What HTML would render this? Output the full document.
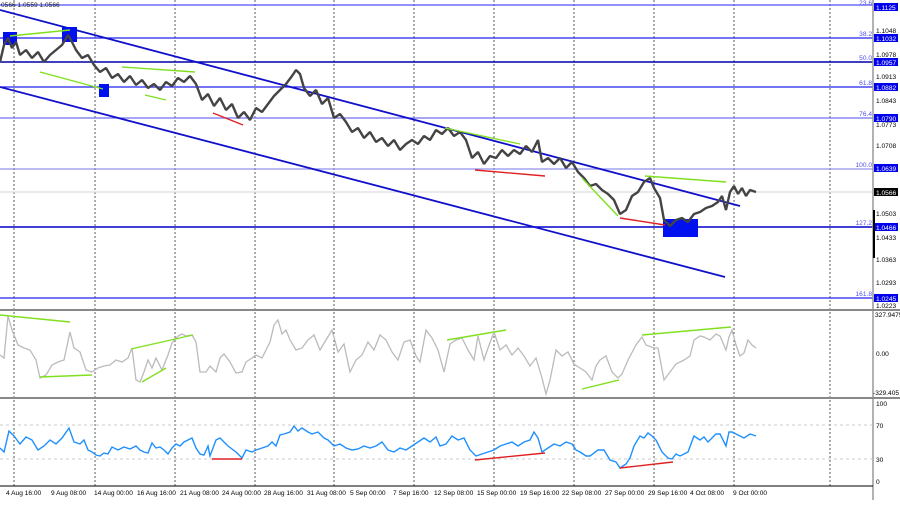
<!DOCTYPE html>
<html><head><style>
body{margin:0;background:#fff;width:900px;height:500px;overflow:hidden;font-family:"Liberation Sans",sans-serif}
svg text{font-family:"Liberation Sans",sans-serif;font-size:6.6px}
</style></head><body>
<svg width="900" height="500" viewBox="0 0 900 500" xmlns="http://www.w3.org/2000/svg">
<rect width="900" height="500" fill="#fff"/>
<g stroke="#333" stroke-width="0.8" stroke-dasharray="2,2">
<line x1="14" y1="0" x2="14" y2="486"/><line x1="95" y1="0" x2="95" y2="486"/><line x1="175" y1="0" x2="175" y2="486"/><line x1="255" y1="0" x2="255" y2="486"/><line x1="334" y1="0" x2="334" y2="486"/><line x1="414" y1="0" x2="414" y2="486"/><line x1="494" y1="0" x2="494" y2="486"/><line x1="574" y1="0" x2="574" y2="486"/><line x1="654" y1="0" x2="654" y2="486"/><line x1="734" y1="0" x2="734" y2="486"/><line x1="830" y1="0" x2="830" y2="486"/>
</g>
<g stroke-width="1.2">
<line x1="0" y1="5" x2="873" y2="5" stroke="#5050ff"/>
<line x1="0" y1="38" x2="873" y2="38" stroke="#2020ee"/>
<line x1="0" y1="62" x2="873" y2="62" stroke="#0000aa" stroke-width="1.6"/>
<line x1="0" y1="87" x2="873" y2="87" stroke="#2020ee"/>
<line x1="0" y1="118" x2="873" y2="118" stroke="#7070ee"/>
<line x1="0" y1="169" x2="873" y2="169" stroke="#9090ee"/>
<line x1="0" y1="192" x2="873" y2="192" stroke="#ddd"/>
<line x1="0" y1="227" x2="873" y2="227" stroke="#0000cc" stroke-width="1.6"/>
<line x1="0" y1="298" x2="873" y2="298" stroke="#2020ee"/>
</g>
<g fill="#5050ee" text-anchor="end"><text x="872" y="5">23.6</text><text x="872" y="36">38.2</text><text x="872" y="60">50.0</text><text x="872" y="85">61.8</text><text x="872" y="116">76.4</text><text x="872" y="167">100.0</text><text x="872" y="225">127.2</text><text x="872" y="296">161.8</text></g>
<line x1="0" y1="10" x2="740" y2="206" stroke="#1010cc" stroke-width="1.8"/>
<line x1="0" y1="87" x2="725" y2="277" stroke="#1010cc" stroke-width="1.8"/>
<g fill="#0010ee"><rect x="3" y="32" width="14" height="13"/><rect x="62" y="27" width="15" height="15"/><rect x="99" y="84" width="10" height="13"/><rect x="663" y="219" width="35" height="18"/></g>
<polyline fill="none" stroke="#444" stroke-width="2.4" stroke-linejoin="bevel" points="0,62 4,45 8,38 12,48 16,42 20,55 26,50 32,58 38,52 44,62 50,55 56,50 62,45 68,35 72,42 76,50 82,58 88,55 94,65 100,72 106,68 112,78 118,74 124,82 130,76 136,85 142,80 148,88 154,84 160,90 166,82 172,86 178,78 184,82 190,76 196,84 202,100 208,94 214,106 220,98 226,110 232,104 238,118 244,112 250,120 256,108 262,112 268,104 274,96 280,90 286,84 292,76 296,70 300,74 304,88 310,96 316,90 322,104 328,98 334,118 340,114 346,122 352,132 358,128 364,138 370,132 376,142 382,138 388,146 394,140 400,150 406,144 412,140 418,144 424,136 430,140 436,130 442,134 448,128 454,136 460,132 466,140 472,158 478,152 484,164 490,156 496,158 502,150 508,156 514,150 520,154 526,146 532,152 538,140 542,162 548,158 554,164 560,158 566,168 572,162 578,172 584,178 590,186 596,184 602,190 608,194 614,200 620,214 626,210 632,196 638,192 644,182 650,178 654,188 660,198 664,220 670,226 676,220 682,218 688,222 694,214 700,212 706,208 712,206 718,202 722,196 726,210 730,192 734,186 738,194 742,188 746,196 750,190 756,192"/>
<g stroke="#80e020" stroke-width="1.4" fill="none">
<line x1="10" y1="36" x2="70" y2="30"/><line x1="40" y1="72" x2="103" y2="89"/><line x1="122" y1="67" x2="195" y2="72"/><line x1="145" y1="95" x2="166" y2="100"/><line x1="445" y1="128" x2="520" y2="144"/><line x1="582" y1="178" x2="618" y2="216"/><line x1="645" y1="176" x2="726" y2="182"/>
</g>
<g stroke="#e02020" stroke-width="1.4"><line x1="213" y1="113" x2="243" y2="125"/><line x1="475" y1="170" x2="545" y2="176"/><line x1="620" y1="218" x2="665" y2="225"/></g>
<rect x="873" y="0" width="27" height="486" fill="#fff"/>
<line x1="873" y1="0" x2="873" y2="500" stroke="#999" stroke-width="1.5"/>
<g fill="#0000ee"><rect x="874" y="3" width="24" height="8"/><rect x="874" y="34" width="24" height="8"/><rect x="874" y="58" width="24" height="8"/><rect x="874" y="83" width="24" height="8"/><rect x="874" y="114" width="24" height="8"/><rect x="874" y="164" width="24" height="8"/><rect x="874" y="223" width="24" height="8"/><rect x="874" y="294" width="24" height="8"/></g>
<rect x="874" y="188" width="24" height="8" fill="#000"/>
<line x1="874" y1="210" x2="874" y2="258" stroke="#000" stroke-width="2"/>
<g fill="#fff"><text x="876" y="10">1.1125</text><text x="876" y="41">1.1032</text><text x="876" y="65">1.0957</text><text x="876" y="90">1.0882</text><text x="876" y="121">1.0790</text><text x="876" y="171">1.0639</text><text x="876" y="195">1.0566</text><text x="876" y="230">1.0466</text><text x="876" y="301">1.0245</text></g>
<g fill="#000"><text x="876" y="33">1.1048</text><text x="876" y="57">1.0978</text><text x="876" y="79">1.0913</text><text x="876" y="103">1.0843</text><text x="876" y="127">1.0773</text><text x="876" y="148">1.0708</text><text x="876" y="216">1.0503</text><text x="876" y="240">1.0433</text><text x="876" y="262">1.0363</text><text x="876" y="285">1.0293</text><text x="876" y="308">1.0223</text></g>
<text x="1" y="7" fill="#222">0566 1.0559 1.0566</text>
<line x1="0" y1="310" x2="900" y2="310" stroke="#888" stroke-width="2"/>
<line x1="0" y1="398" x2="900" y2="398" stroke="#888" stroke-width="2"/>
<line x1="0" y1="486" x2="873" y2="486" stroke="#000"/>
<polyline fill="none" stroke="#bbb" stroke-width="1.3" points="0,355 4,358 8,316 12,330 18,345 24,348 30,350 36,360 40,378 46,375 52,365 58,362 64,360 70,332 74,348 80,352 86,370 92,372 98,368 104,366 110,365 116,360 122,362 128,358 132,348 136,380 140,382 144,372 148,360 152,368 156,358 162,370 168,355 172,343 178,336 182,334 186,336 192,335 196,342 200,372 206,372 210,366 216,372 220,358 224,354 230,362 236,373 242,372 246,362 252,358 256,355 262,358 266,350 270,342 274,325 278,320 282,334 286,330 290,340 296,350 302,348 308,340 314,335 320,350 326,340 332,330 338,352 344,344 350,372 356,360 362,355 368,342 374,350 380,335 386,340 392,352 398,360 404,342 410,340 416,356 420,362 426,330 432,338 438,350 444,372 450,344 456,340 462,338 468,350 474,360 478,336 484,360 488,348 494,332 500,350 506,345 512,355 518,348 524,356 530,366 536,358 542,378 546,394 550,380 556,350 562,356 568,352 574,364 580,368 586,372 592,380 596,366 600,360 606,356 612,372 618,378 622,374 628,360 636,345 642,337 646,345 654,348 658,348 664,380 670,372 676,364 684,360 690,356 694,340 700,336 704,337 710,340 716,334 720,336 726,350 729,337 732,330 736,345 740,356 744,353 748,340 752,345 756,348"/>
<g stroke="#80e020" stroke-width="1.4"><line x1="0" y1="315" x2="70" y2="322"/><line x1="40" y1="377" x2="92" y2="375"/><line x1="131" y1="349" x2="193" y2="335"/><line x1="142" y1="382" x2="166" y2="368"/><line x1="447" y1="340" x2="506" y2="330"/><line x1="582" y1="389" x2="619" y2="380"/><line x1="642" y1="335" x2="731" y2="327"/></g>
<g fill="#000"><text x="875" y="317">327.9475</text><text x="876" y="356">0.00</text><text x="873" y="395">-329.405</text></g>
<g stroke="#bbb" stroke-width="0.8" stroke-dasharray="3,3"><line x1="0" y1="425" x2="873" y2="425"/><line x1="0" y1="459" x2="873" y2="459"/></g>
<polyline fill="none" stroke="#1e90ff" stroke-width="1.4" points="0,448 4,452 9,431 14,436 20,444 26,437 32,440 38,450 44,446 50,440 56,444 62,438 69,428 74,442 80,444 84,440 88,450 92,452 96,455 100,456 104,453 108,454 112,447 118,450 124,447 130,449 136,446 140,450 144,452 148,453 152,443 156,448 160,447 164,450 168,454 172,448 176,444 180,446 184,442 188,440 192,438 196,448 200,454 204,455 208,446 210,456 216,440 220,438 228,446 236,452 242,458 246,450 252,452 256,450 262,448 268,446 272,442 276,446 280,435 284,434 290,432 294,426 298,431 302,428 308,432 312,434 318,432 324,438 328,440 334,446 340,444 346,448 352,450 358,449 364,446 370,448 376,446 382,442 388,450 394,452 400,448 406,450 412,446 418,442 424,438 430,442 436,437 440,446 446,444 452,436 458,440 464,438 470,450 476,456 482,454 488,452 494,450 500,446 506,444 512,442 518,446 524,442 530,440 534,432 538,438 542,452 548,448 554,444 560,446 566,442 572,444 576,450 580,452 586,456 590,456 598,450 604,450 610,460 616,462 620,468 626,464 630,458 634,446 640,436 644,438 648,433 652,436 656,440 662,452 668,458 672,459 676,454 680,456 688,452 694,436 700,440 704,437 708,442 712,438 716,434 720,434 726,446 729,432 732,432 738,435 744,438 750,434 756,436"/>
<g stroke="#e02020" stroke-width="1.4"><line x1="212" y1="459" x2="242" y2="459"/><line x1="475" y1="460" x2="545" y2="453"/><line x1="620" y1="468" x2="673" y2="462"/></g>
<g fill="#000"><text x="876" y="406">100</text><text x="876" y="428">70</text><text x="876" y="462">30</text><text x="876" y="484">0</text></g>
<g fill="#000"><text x="6" y="495">4 Aug 16:00</text><text x="51" y="495">9 Aug 08:00</text><text x="94" y="495">14 Aug 00:00</text><text x="137" y="495">16 Aug 16:00</text><text x="180" y="495">21 Aug 08:00</text><text x="222" y="495">24 Aug 00:00</text><text x="264" y="495">28 Aug 16:00</text><text x="307" y="495">31 Aug 08:00</text><text x="350" y="495">5 Sep 00:00</text><text x="393" y="495">7 Sep 16:00</text><text x="434" y="495">12 Sep 08:00</text><text x="477" y="495">15 Sep 00:00</text><text x="520" y="495">19 Sep 16:00</text><text x="562" y="495">22 Sep 08:00</text><text x="605" y="495">27 Sep 00:00</text><text x="648" y="495">29 Sep 16:00</text><text x="690" y="495">4 Oct 08:00</text><text x="733" y="495">9 Oct 00:00</text></g>
</svg>
</body></html>
